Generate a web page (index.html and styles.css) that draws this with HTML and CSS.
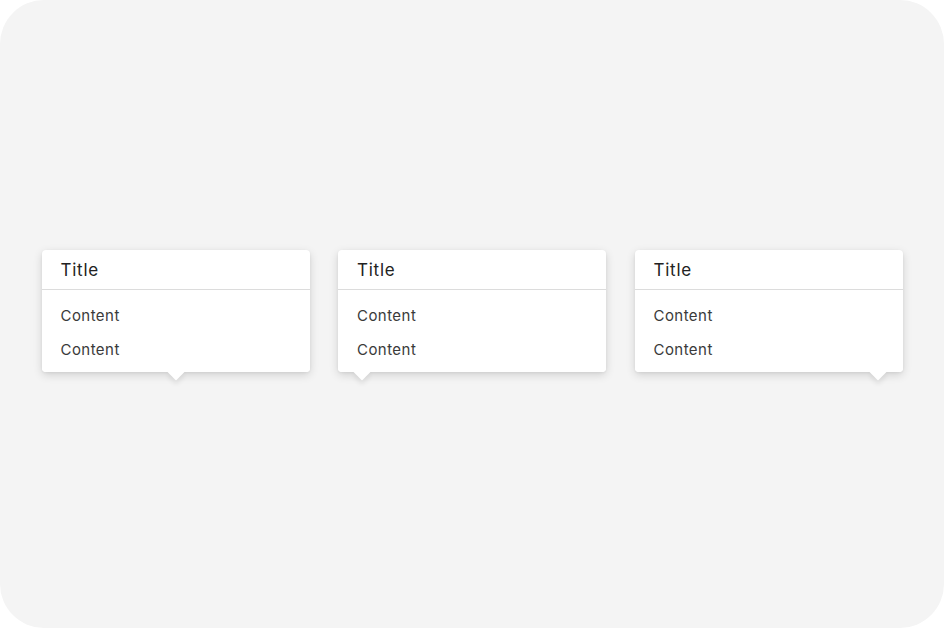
FILE: index.html
```html
<!DOCTYPE html>
<html lang="en">
<head>
<meta charset="utf-8">
<title>Popovers</title>
<link rel="stylesheet" href="styles.css">
</head>
<body>
<div class="canvas">
  <div class="row">
    <div class="popover arrow-center">
      <div class="popover-title">Title</div>
      <div class="popover-body">
        <div class="popover-item">Content</div>
        <div class="popover-item">Content</div>
      </div>
    </div>
    <div class="popover arrow-start">
      <div class="popover-title">Title</div>
      <div class="popover-body">
        <div class="popover-item">Content</div>
        <div class="popover-item">Content</div>
      </div>
    </div>
    <div class="popover arrow-end">
      <div class="popover-title">Title</div>
      <div class="popover-body">
        <div class="popover-item">Content</div>
        <div class="popover-item">Content</div>
      </div>
    </div>
  </div>
</div>
</body>
</html>
```

FILE: styles.css
```css
* { box-sizing: border-box; }
html, body {
  margin: 0;
  padding: 0;
  background: #ffffff;
}
body {
  font-family: Inter, "Noto Sans", "Liberation Sans", sans-serif;
}
.canvas {
  width: 944px;
  height: 628px;
  background: #f4f4f4;
  border-radius: 44px;
  display: flex;
  align-items: center;
  justify-content: center;
}
.row {
  display: flex;
  gap: 28.5px;
  padding-bottom: 6px;
}
.popover {
  position: relative;
  width: 268px;
  background: #ffffff;
  border-radius: 4px;
  box-shadow: 0 3px 10px rgba(0, 0, 0, 0.14), 0 1px 3px rgba(0, 0, 0, 0.06);
}
.popover::after {
  content: "";
  position: absolute;
  bottom: -6px;
  width: 12px;
  height: 12px;
  background: #ffffff;
  transform: rotate(45deg);
  box-shadow: 3px 3px 5px rgba(0, 0, 0, 0.08);
  z-index: 0;
}
.popover::before {
  content: "";
  position: absolute;
  left: 0;
  right: 0;
  bottom: 0;
  height: 12px;
  background: #ffffff;
  border-radius: 0 0 4px 4px;
  z-index: 1;
}
.arrow-center::after { left: calc(50% - 6px); }
.arrow-start::after { left: 18px; }
.arrow-end::after { right: 19px; }
.popover-title {
  position: relative;
  z-index: 2;
  padding: 8px 18px 7px 19px;
  font-size: 17px;
  line-height: 24px;
  letter-spacing: 0.75px;
  color: #222222;
  border-bottom: 1px solid #dcdcdc;
}
.popover-body {
  position: relative;
  z-index: 2;
  padding: 9px 18px 5px 19px;
}
.popover-item {
  font-size: 15px;
  line-height: 24px;
  letter-spacing: 0.45px;
  padding: 5px 0;
  color: #3a3a3a;
}
```
